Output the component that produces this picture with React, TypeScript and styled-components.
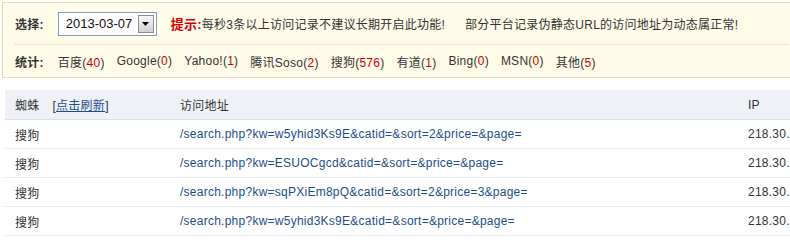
import React from "react";
import styled, { createGlobalStyle } from "styled-components";

const Global = createGlobalStyle`
  html, body { margin: 0; padding: 0; background: #fff; }
  body {
    font-family: "Liberation Sans", "Noto Sans CJK SC", sans-serif;
    font-size: 12px;
    letter-spacing: 0.25px;
    color: #333;
    overflow: hidden;
  }
`;

const Page = styled.div`
  width: 790px;
  height: 242px;
  overflow: hidden;
`;

const Panel = styled.div`
  margin: 2px -20px 0 2px;
  border: 1px solid #efd9a4;
  background: #fffbe9;
  padding: 0 12px;
  box-shadow: inset 0 0 0 3px #fffdf2;
`;

const Line = styled.div<{ $dashed?: boolean }>`
  display: flex;
  align-items: center;
  height: ${(p) => (p.$dashed ? "41px" : "32px")};
  border-bottom: ${(p) => (p.$dashed ? "1px dotted #dcd6c0" : "none")};
  white-space: nowrap;
`;

const Label = styled.span`
  font-weight: bold;
  color: #333;
  margin-right: 14px;
`;

const Select = styled.div`
  display: flex;
  align-items: center;
  width: 99px;
  height: 24px;
  box-sizing: border-box;
  border: 1px solid #7f9db9;
  background: #fff;
  padding: 0 2px 0 7px;
  font-size: 13px;
  letter-spacing: 0;
  color: #111;
  margin-right: 14px;
`;

const SelectText = styled.span`
  flex: 1;
`;

const DropButton = styled.span`
  width: 16px;
  height: 18px;
  box-sizing: border-box;
  border: 1px solid #8e8f8f;
  background: linear-gradient(#f6f6f6, #d2d2d2);
  display: flex;
  align-items: center;
  justify-content: center;
`;

const Tip = styled.span`
  color: #d40000;
  font-weight: bold;
  font-size: 13px;
`;

const Msg = styled.span<{ $gap?: number }>`
  color: #333;
  margin-left: ${(p) => p.$gap ?? 0}px;
`;

const Stat = styled.span`
  margin-right: 12px;
`;

const Num = styled.span`
  color: #cc0000;
`;

const Table = styled.div`
  margin: 12px 0 0 5px;
`;

const Row = styled.div<{ $head?: boolean }>`
  display: grid;
  grid-template-columns: 165px 568px 60px;
  align-items: center;
  height: ${(p) => (p.$head ? "29px" : "28px")};
  background: ${(p) => (p.$head ? "#eef2f7" : "#fff")};
  border-bottom: 1px solid ${(p) => (p.$head ? "#d9e0e7" : "#e6eaee")};
  white-space: nowrap;
`;

const Cell = styled.div`
  padding-left: 10px;
  overflow: hidden;
`;

const Link = styled.a`
  color: #1c4e8c;
  text-decoration: none;
`;

const Refresh = styled.span`
  margin-left: 13px;
  color: #333;
`;

const Under = styled.a`
  color: #1c4e8c;
  text-decoration: underline;
`;

const stats: [string, string][] = [
  ["百度", "40"],
  ["Google", "0"],
  ["Yahoo!", "1"],
  ["腾讯Soso", "2"],
  ["搜狗", "576"],
  ["有道", "1"],
  ["Bing", "0"],
  ["MSN", "0"],
  ["其他", "5"],
];

const rows = [
  "/search.php?kw=w5yhid3Ks9E&catid=&sort=2&price=&page=",
  "/search.php?kw=ESUOCgcd&catid=&sort=&price=&page=",
  "/search.php?kw=sqPXiEm8pQ&catid=&sort=2&price=3&page=",
  "/search.php?kw=w5yhid3Ks9E&catid=&sort=&price=&page=",
];

export default function App() {
  return (
    <Page>
      <Global />
      <Panel>
        <Line $dashed>
          <Label>选择:</Label>
          <Select>
            <SelectText>2013-03-07</SelectText>
            <DropButton>
              <svg width="7" height="4" viewBox="0 0 7 4">
                <path d="M0 0h7L3.5 4z" fill="#000" />
              </svg>
            </DropButton>
          </Select>
          <Tip>提示:</Tip>
          <Msg>每秒3条以上访问记录不建议长期开启此功能!</Msg>
          <Msg $gap={20}>部分平台记录伪静态URL的访问地址为动态属正常!</Msg>
        </Line>
        <Line>
          <Label>统计:</Label>
          {stats.map(([n, c]) => (
            <Stat key={n}>
              {n}(<Num>{c}</Num>)
            </Stat>
          ))}
        </Line>
      </Panel>
      <Table>
        <Row $head>
          <Cell>
            蜘蛛
            <Refresh>
              [<Under href="#">点击刷新</Under>]
            </Refresh>
          </Cell>
          <Cell>访问地址</Cell>
          <Cell>IP</Cell>
        </Row>
        {rows.map((r, i) => (
          <Row key={i}>
            <Cell>搜狗</Cell>
            <Cell>
              <Link href="#">{r}</Link>
            </Cell>
            <Cell>218.30.</Cell>
          </Row>
        ))}
      </Table>
    </Page>
  );
}
